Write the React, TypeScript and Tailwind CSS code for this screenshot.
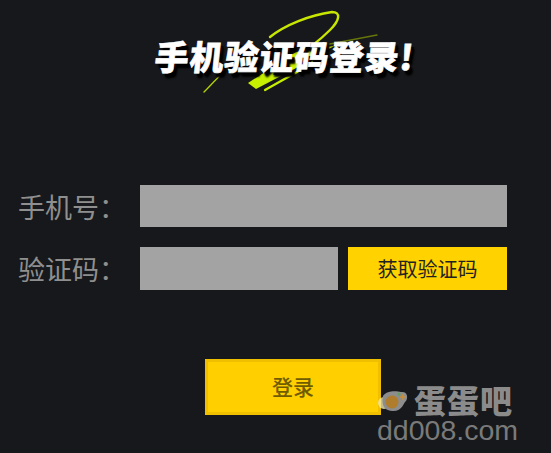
export default function App() {
  const cjk = { fontFamily: '"Noto Sans CJK SC", "Liberation Sans", sans-serif' };
  return (
    <div className="relative w-[551px] h-[453px] overflow-hidden bg-[#17181b] flex flex-col" style={cjk}>
      {/* Title */}
      <div className="relative h-[185px] shrink-0">
        <svg className="absolute left-[190px] top-0" width="200" height="100" viewBox="190 0 200 100" fill="none">
          <path d="M270 37 C 285 25, 310 15, 332 12 C 341 12, 340 20, 330 30 C 315 45, 300 55, 288 63" stroke="#c8e600" strokeWidth="2.4" strokeLinecap="round" />
          <path d="M204 92 C 210 86, 216 79, 224 72" stroke="#b8d400" strokeWidth="1.3" strokeLinecap="round" />
          <path d="M248 83 L 256 89 L 300 66 L 334 46 L 296 52 Z" fill="#c6f000" />
          <path d="M265 90 L 297 72 L 312 62" stroke="#c6f000" strokeWidth="2.2" strokeLinecap="round" />
          <path d="M330 44 L 377 35" stroke="#66760a" strokeWidth="1.3" strokeLinecap="round" />
        </svg>
        <div className="absolute left-[155px] top-[31px] text-[34px] leading-[50px] font-black -skew-x-6 text-white whitespace-nowrap tracking-[1px] [-webkit-text-stroke:0.6px_white] [text-shadow:3px_3px_1px_#000,4px_5px_2px_#000]">
          手机验证码登录!
        </div>
      </div>

      {/* Form */}
      <div className="flex flex-col gap-5 pl-[18px]">
        <div className="flex items-center h-[42px]">
          <span className="w-[122px] text-[27px] leading-none text-[#8f8f8f] whitespace-nowrap">手机号：</span>
          <div className="w-[367px] h-[42px] bg-[#a3a3a3]" />
        </div>
        <div className="flex items-center h-[43px]">
          <span className="w-[122px] text-[27px] leading-none text-[#8f8f8f] whitespace-nowrap">验证码：</span>
          <div className="w-[198px] h-[43px] bg-[#a3a3a3]" />
          <button className="ml-[10px] w-[159px] h-[43px] bg-[#ffd200] text-[#222] text-[20px] flex items-center justify-center">
            获取验证码
          </button>
        </div>
      </div>

      {/* Login */}
      <button className="mt-[69px] ml-[205px] w-[176px] h-[56px] bg-[#ffcf00] border-[3px] border-[#f0c000] text-[#6f5c00] text-[21px] font-medium flex items-center justify-center">
        登录
      </button>

      {/* Watermark */}
      <div className="absolute left-[377px] top-[383px] w-[150px] flex flex-col items-start">
        <div className="flex items-center h-[32px]">
          <svg width="34" height="30" viewBox="0 0 34 30">
            <circle cx="7" cy="19" r="6" fill="#f3e7a8" opacity="0.8" />
            <path d="M6 12 C10 6 20 7 24 8 C31 7 31 14 29 17 C26 19 26 27 16 27 C8 27 4 22 6 12 Z" fill="#8d8d8d" />
            <circle cx="15" cy="18" r="6.5" fill="#b07d2c" />
            <circle cx="22" cy="10" r="1.5" fill="#5da35d" />
            <path d="M26 10 V16 M23 13 H29" stroke="#c98f3a" strokeWidth="1.6" />
          </svg>
          <span className="ml-[3px] text-[32px] leading-none font-black text-[#8b8b8b] tracking-[1px] whitespace-nowrap">蛋蛋吧</span>
        </div>
        <span className="text-[28.5px] leading-[30px] text-[#7a7a7a]" style={{ fontFamily: '"Liberation Sans", sans-serif' }}>dd008.com</span>
      </div>
    </div>
  );
}
